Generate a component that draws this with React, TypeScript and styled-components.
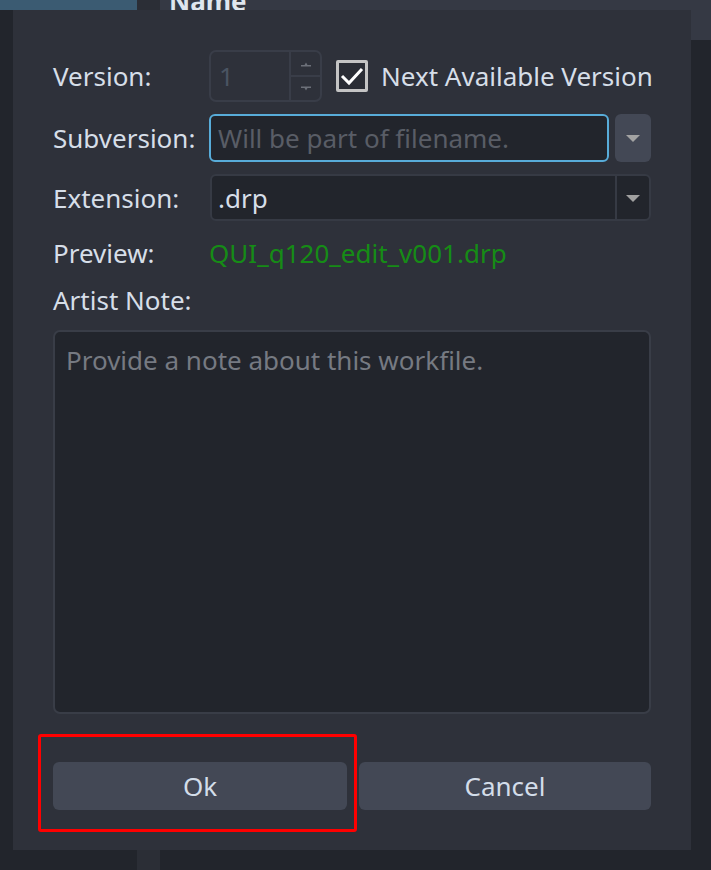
import React, { useState } from 'react';
import styled, { createGlobalStyle } from 'styled-components';

const GlobalStyle = createGlobalStyle`
  html, body {
    margin: 0;
    padding: 0;
    background: #22252c;
    font-family: "Noto Sans", "Open Sans", sans-serif;
  }
`;

const Page = styled.div`
  position: relative;
  width: 711px;
  height: 870px;
  overflow: hidden;
  display: grid;
  grid-template-columns: 137px 23px 1fr;
  background: #22252c;
`;

const SidePanel = styled.div`
  display: flex;
  flex-direction: column;
  background: #22252c;
`;

const SelectedItem = styled.div`
  height: 10px;
  background: #3b5b72;
`;

const Splitter = styled.div`
  background: #2b2e36;
`;

const TablePane = styled.div`
  display: flex;
  flex-direction: column;
`;

const TableHeader = styled.div`
  height: 40px;
  background: #353944;
  display: flex;
  align-items: flex-start;
  padding-left: 9px;
  overflow: hidden;
`;

const HeaderText = styled.span`
  font-size: 26px;
  font-weight: 700;
  color: #dfe6ee;
  line-height: 26px;
  margin-top: -12px;
`;

const Dialog = styled.div`
  position: absolute;
  left: 13px;
  top: 10px;
  width: 678px;
  height: 840px;
  box-sizing: border-box;
  background: #2e313a;
  padding: 40px;
  display: flex;
  flex-direction: column;
  color: #d6dee8;
  font-size: 26px;
`;

const Row = styled.div<{ $h: number; $mt?: number }>`
  display: grid;
  grid-template-columns: 156px 1fr;
  align-items: center;
  height: ${p => p.$h}px;
  margin-top: ${p => p.$mt ?? 0}px;
`;

const Label = styled.div`
  color: #d6dee8;
  white-space: nowrap;
`;

const Field = styled.div`
  display: flex;
  align-items: center;
  gap: 6px;
  height: 100%;
`;

const SpinBox = styled.div`
  width: 113px;
  height: 52px;
  box-sizing: border-box;
  border: 2px solid #393d48;
  border-radius: 7px;
  display: flex;
`;

const SpinValue = styled.div`
  flex: 1;
  display: flex;
  align-items: center;
  padding-left: 8px;
  color: #4a5462;
`;

const SpinButtons = styled.div`
  width: 29px;
  border-left: 2px solid #393d48;
  display: flex;
  flex-direction: column;
`;

const SpinButton = styled.div<{ $top?: boolean }>`
  flex: 1;
  display: flex;
  align-items: center;
  justify-content: center;
  border-bottom: ${p => (p.$top ? '2px solid #393d48' : 'none')};
`;

const CheckWrap = styled.label`
  display: flex;
  align-items: center;
  gap: 13px;
  margin-left: 8px;
  color: #d6dee8;
  white-space: nowrap;
`;

const CheckBox = styled.div`
  width: 32px;
  height: 32px;
  box-sizing: border-box;
  border: 3px solid #c4c4c4;
  border-radius: 2px;
  background: #2a2d35;
  display: flex;
  align-items: center;
  justify-content: center;
`;

const TextInput = styled.input`
  flex: 1;
  height: 48px;
  box-sizing: border-box;
  background: #22252c;
  border: 2px solid #58acd9;
  border-radius: 6px;
  padding: 0 7px;
  font-family: inherit;
  font-size: 26px;
  color: #d6dee8;
  outline: none;

  &::placeholder {
    color: #595d66;
  }
`;

const DropButton = styled.div`
  width: 36px;
  height: 48px;
  border-radius: 6px;
  background: #434855;
  display: flex;
  align-items: center;
  justify-content: center;
`;

const Combo = styled.div`
  flex: 1;
  height: 47px;
  box-sizing: border-box;
  background: #22252c;
  border: 2px solid #363a44;
  border-radius: 6px;
  display: flex;
  margin-left: 1px;
`;

const ComboValue = styled.div`
  flex: 1;
  display: flex;
  align-items: center;
  padding-left: 6px;
  color: #d6dee8;
`;

const ComboArrow = styled.div`
  width: 32px;
  border-left: 2px solid #363a44;
  display: flex;
  align-items: center;
  justify-content: center;
`;

const PreviewText = styled.div`
  color: #168c16;
  white-space: nowrap;
`;

const NoteLabel = styled.div`
  height: 40px;
  display: flex;
  align-items: center;
  margin-top: 7px;
`;

const NoteArea = styled.textarea`
  margin-top: 10px;
  height: 384px;
  box-sizing: border-box;
  resize: none;
  background: #22252c;
  border: 2px solid #393d47;
  border-radius: 7px;
  padding: 11px 11px;
  font-family: inherit;
  font-size: 26px;
  line-height: 34px;
  color: #d6dee8;
  outline: none;

  &::placeholder {
    color: #767a82;
  }
`;

const ButtonRow = styled.div`
  margin-top: 48px;
  display: grid;
  grid-template-columns: 294px 1fr;
  gap: 12px;
`;

const Button = styled.button`
  height: 48px;
  border: none;
  border-radius: 6px;
  background: #434855;
  color: #d3dde9;
  font-family: inherit;
  font-size: 26px;
  cursor: pointer;
`;

const Highlight = styled.div`
  position: absolute;
  left: 38px;
  top: 734px;
  width: 319px;
  height: 98px;
  box-sizing: border-box;
  border: 3px solid #ff0000;
  border-radius: 3px;
  pointer-events: none;
`;

const TriDown = ({ color = '#9a9a9a' }: { color?: string }) => (
  <svg width="16" height="10" viewBox="0 0 16 10">
    <path d="M1 2 H15 L8 9 Z" fill={color} />
  </svg>
);

const SpinArrow = ({ up }: { up?: boolean }) => (
  <svg width="12" height="6" viewBox="0 0 12 6">
    {up ? (
      <path d="M1 4 H11 V5.5 H1 Z M4.5 4 L6 1.5 L7.5 4 Z" fill="#6c7079" />
    ) : (
      <path d="M1 0.5 H11 V2 H1 Z M4.5 2 L6 4.5 L7.5 2 Z" fill="#6c7079" />
    )}
  </svg>
);

export default function App() {
  const [nextAvailable, setNextAvailable] = useState(true);

  return (
    <>
      <GlobalStyle />
      <Page>
        <SidePanel>
          <SelectedItem />
        </SidePanel>
        <Splitter />
        <TablePane>
          <TableHeader>
            <HeaderText>Name</HeaderText>
          </TableHeader>
        </TablePane>

        <Dialog>
          <Row $h={52}>
            <Label>Version:</Label>
            <Field>
              <SpinBox>
                <SpinValue>1</SpinValue>
                <SpinButtons>
                  <SpinButton $top>
                    <SpinArrow up />
                  </SpinButton>
                  <SpinButton>
                    <SpinArrow />
                  </SpinButton>
                </SpinButtons>
              </SpinBox>
              <CheckWrap onClick={() => setNextAvailable(!nextAvailable)}>
                <CheckBox>
                  {nextAvailable && (
                    <svg width="24" height="20" viewBox="0 0 24 20">
                      <path d="M2 10 L9 17 L22 3" stroke="#ffffff" strokeWidth="3" fill="none" />
                    </svg>
                  )}
                </CheckBox>
                Next Available Version
              </CheckWrap>
            </Field>
          </Row>

          <Row $h={48} $mt={12}>
            <Label>Subversion:</Label>
            <Field>
              <TextInput placeholder="Will be part of filename." />
              <DropButton>
                <TriDown color="#a3a3a3" />
              </DropButton>
            </Field>
          </Row>

          <Row $h={47} $mt={12}>
            <Label>Extension:</Label>
            <Field>
              <Combo>
                <ComboValue>.drp</ComboValue>
                <ComboArrow>
                  <TriDown color="#a0a0a0" />
                </ComboArrow>
              </Combo>
            </Field>
          </Row>

          <Row $h={40} $mt={12}>
            <Label>Preview:</Label>
            <PreviewText>QUI_q120_edit_v001.drp</PreviewText>
          </Row>

          <NoteLabel>Artist Note:</NoteLabel>
          <NoteArea placeholder="Provide a note about this workfile." />

          <ButtonRow>
            <Button>Ok</Button>
            <Button>Cancel</Button>
          </ButtonRow>
        </Dialog>

        <Highlight />
      </Page>
    </>
  );
}
